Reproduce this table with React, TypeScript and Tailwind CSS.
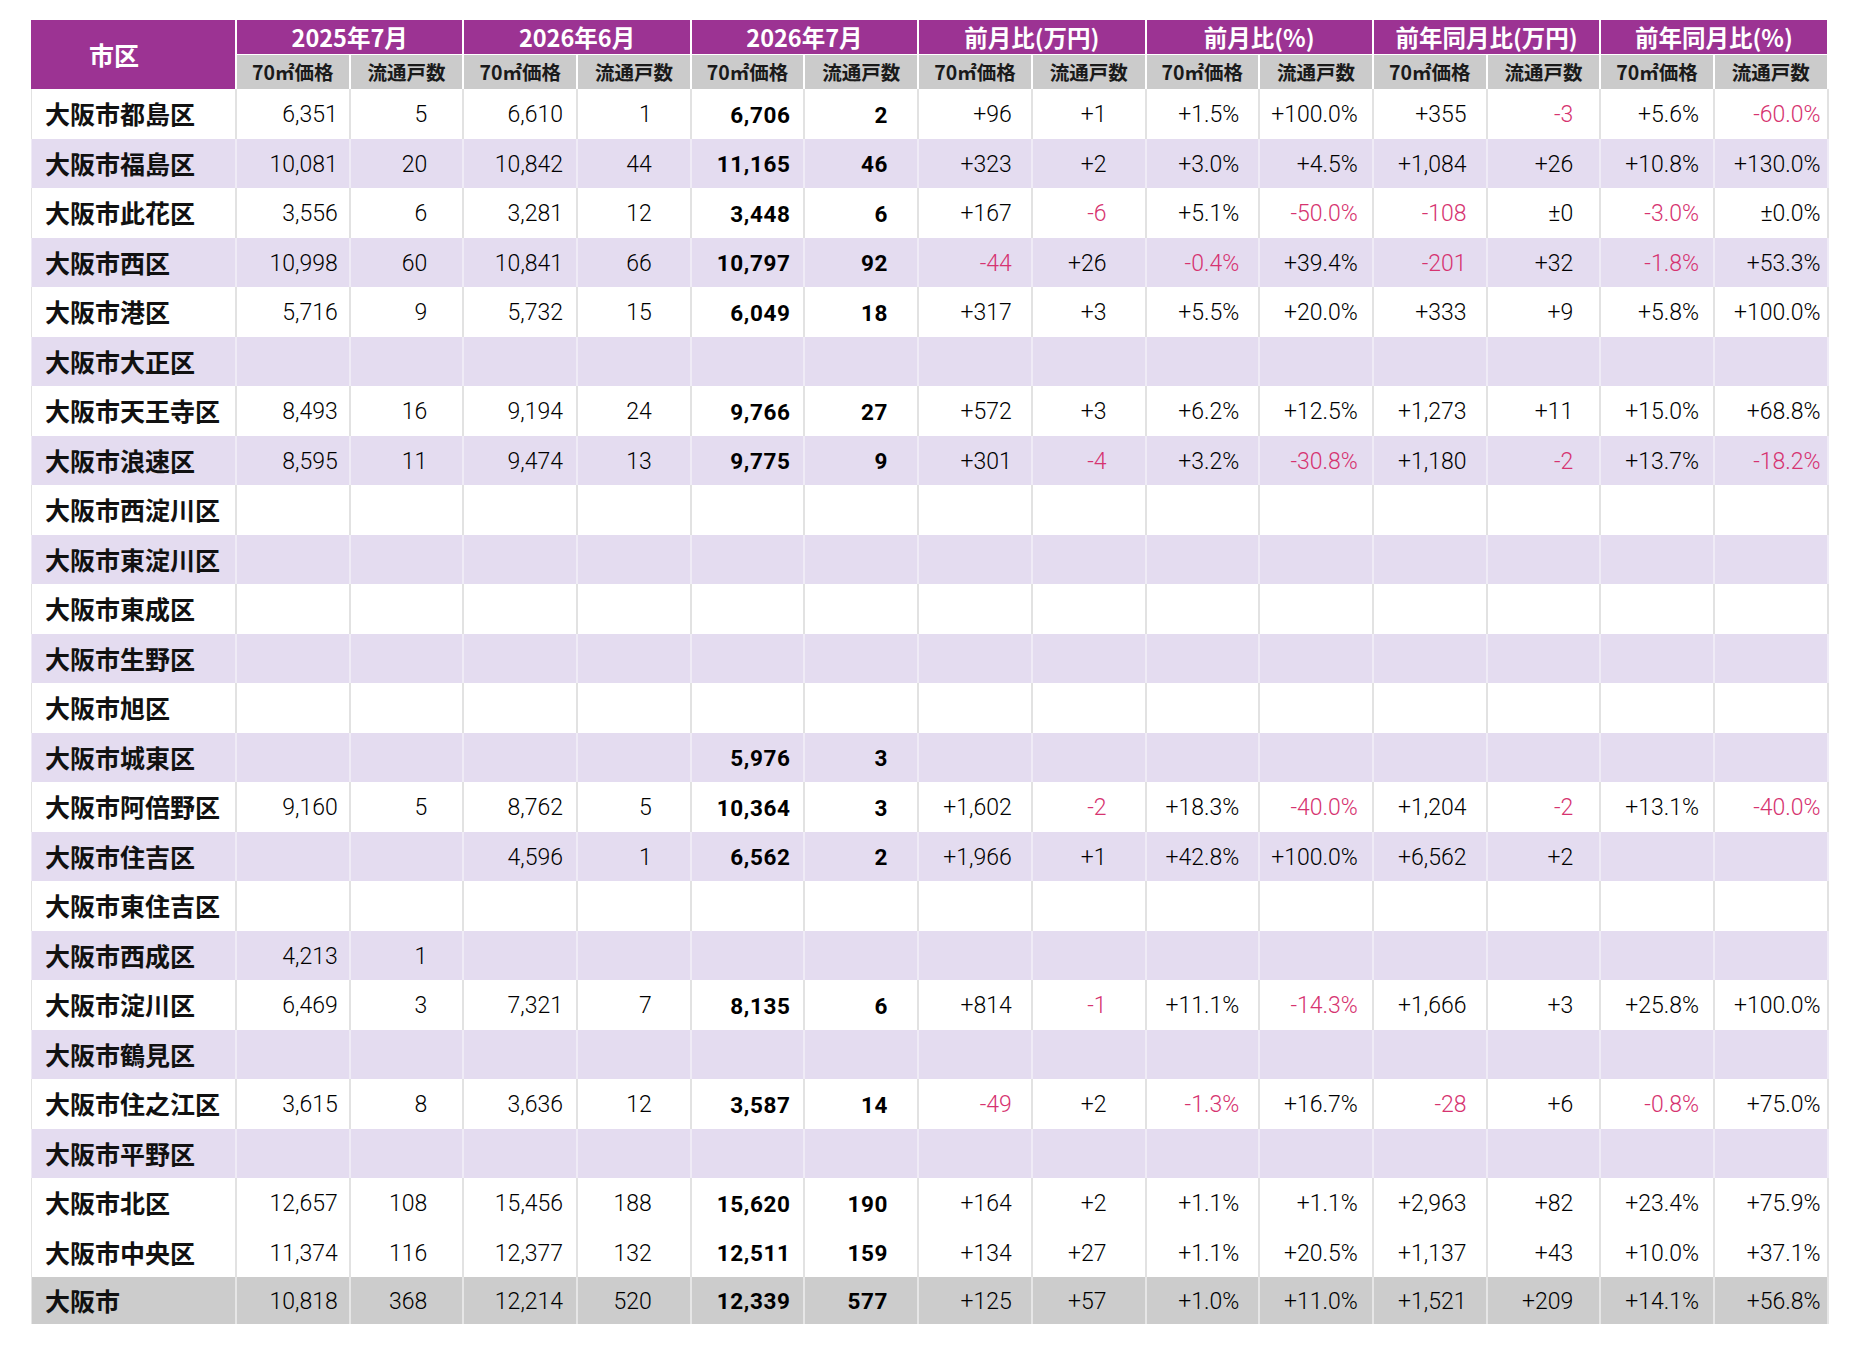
import React from "react";

const PR = [
  "pr-[11px]",
  "pr-[35px]",
  "pr-[13px]",
  "pr-[38px]",
  "pr-[13px]",
  "pr-[29px]",
  "pr-[19px]",
  "pr-[38px]",
  "pr-[19px]",
  "pr-[14px]",
  "pr-[19px]",
  "pr-[26px]",
  "pr-[14px]",
  "pr-[6px]",
];

type Row = { name: string; v: string[]; bg: "w" | "l" | "g" };

const E = ["", "", "", "", "", "", "", "", "", "", "", "", "", ""];

const rows: Row[] = [
  { name: "大阪市都島区", bg: "w", v: ["6,351", "5", "6,610", "1", "6,706", "2", "+96", "+1", "+1.5%", "+100.0%", "+355", "-3", "+5.6%", "-60.0%"] },
  { name: "大阪市福島区", bg: "l", v: ["10,081", "20", "10,842", "44", "11,165", "46", "+323", "+2", "+3.0%", "+4.5%", "+1,084", "+26", "+10.8%", "+130.0%"] },
  { name: "大阪市此花区", bg: "w", v: ["3,556", "6", "3,281", "12", "3,448", "6", "+167", "-6", "+5.1%", "-50.0%", "-108", "±0", "-3.0%", "±0.0%"] },
  { name: "大阪市西区", bg: "l", v: ["10,998", "60", "10,841", "66", "10,797", "92", "-44", "+26", "-0.4%", "+39.4%", "-201", "+32", "-1.8%", "+53.3%"] },
  { name: "大阪市港区", bg: "w", v: ["5,716", "9", "5,732", "15", "6,049", "18", "+317", "+3", "+5.5%", "+20.0%", "+333", "+9", "+5.8%", "+100.0%"] },
  { name: "大阪市大正区", bg: "l", v: E },
  { name: "大阪市天王寺区", bg: "w", v: ["8,493", "16", "9,194", "24", "9,766", "27", "+572", "+3", "+6.2%", "+12.5%", "+1,273", "+11", "+15.0%", "+68.8%"] },
  { name: "大阪市浪速区", bg: "l", v: ["8,595", "11", "9,474", "13", "9,775", "9", "+301", "-4", "+3.2%", "-30.8%", "+1,180", "-2", "+13.7%", "-18.2%"] },
  { name: "大阪市西淀川区", bg: "w", v: E },
  { name: "大阪市東淀川区", bg: "l", v: E },
  { name: "大阪市東成区", bg: "w", v: E },
  { name: "大阪市生野区", bg: "l", v: E },
  { name: "大阪市旭区", bg: "w", v: E },
  { name: "大阪市城東区", bg: "l", v: ["", "", "", "", "5,976", "3", "", "", "", "", "", "", "", ""] },
  { name: "大阪市阿倍野区", bg: "w", v: ["9,160", "5", "8,762", "5", "10,364", "3", "+1,602", "-2", "+18.3%", "-40.0%", "+1,204", "-2", "+13.1%", "-40.0%"] },
  { name: "大阪市住吉区", bg: "l", v: ["", "", "4,596", "1", "6,562", "2", "+1,966", "+1", "+42.8%", "+100.0%", "+6,562", "+2", "", ""] },
  { name: "大阪市東住吉区", bg: "w", v: E },
  { name: "大阪市西成区", bg: "l", v: ["4,213", "1", "", "", "", "", "", "", "", "", "", "", "", ""] },
  { name: "大阪市淀川区", bg: "w", v: ["6,469", "3", "7,321", "7", "8,135", "6", "+814", "-1", "+11.1%", "-14.3%", "+1,666", "+3", "+25.8%", "+100.0%"] },
  { name: "大阪市鶴見区", bg: "l", v: E },
  { name: "大阪市住之江区", bg: "w", v: ["3,615", "8", "3,636", "12", "3,587", "14", "-49", "+2", "-1.3%", "+16.7%", "-28", "+6", "-0.8%", "+75.0%"] },
  { name: "大阪市平野区", bg: "l", v: E },
  { name: "大阪市北区", bg: "w", v: ["12,657", "108", "15,456", "188", "15,620", "190", "+164", "+2", "+1.1%", "+1.1%", "+2,963", "+82", "+23.4%", "+75.9%"] },
  { name: "大阪市中央区", bg: "w", v: ["11,374", "116", "12,377", "132", "12,511", "159", "+134", "+27", "+1.1%", "+20.5%", "+1,137", "+43", "+10.0%", "+37.1%"] },
  { name: "大阪市", bg: "g", v: ["10,818", "368", "12,214", "520", "12,339", "577", "+125", "+57", "+1.0%", "+11.0%", "+1,521", "+209", "+14.1%", "+56.8%"] },
];

const groups = [
  "2025年7月",
  "2026年6月",
  "2026年7月",
  "前月比(万円)",
  "前月比(%)",
  "前年同月比(万円)",
  "前年同月比(%)",
];

const JP = "font-['Noto_Sans_CJK_JP','Noto_Sans_CJK_SC',sans-serif]";
const NUM = "font-['Roboto','Noto_Sans_CJK_JP',sans-serif]";

export default function App() {
  return (
    <div className="min-h-[1350px] w-[1860px] bg-white pl-[31px] pt-[20px]">
      <div className="grid grid-cols-[206px_repeat(14,113.7px)] grid-rows-[35px_34px_repeat(24,49.5px)_47px]">
        {/* header */}
        <div
          className={`row-span-2 flex items-center border-r-2 border-white bg-[#9c3393] pl-[58px] text-[25px] font-bold text-white ${JP}`}
        >
          市区
        </div>
        {groups.map((g) => (
          <div
            key={g}
            className={`col-span-2 flex items-center justify-center border-r-2 border-b-[1.5px] border-white bg-[#9c3393] pt-[1px] text-[23.5px] font-semibold leading-none text-white ${JP}`}
          >
            {g}
          </div>
        ))}
        {groups.map((g) => (
          <React.Fragment key={g + "s"}>
            <div
              className={`flex items-center justify-center border-r-2 border-white bg-[#cbcbcb] text-[19.5px] font-bold leading-none text-[#1a1a1a] ${JP}`}
            >
              70㎡価格
            </div>
            <div
              className={`flex items-center justify-center border-r-2 border-white bg-[#cbcbcb] text-[19.5px] font-bold leading-none text-[#1a1a1a] ${JP}`}
            >
              流通戸数
            </div>
          </React.Fragment>
        ))}
        {/* body */}
        {rows.map((r) => {
          const bg =
            r.bg === "w"
              ? "bg-white border-[#e2e2e2]"
              : r.bg === "l"
              ? "bg-[#e4dcf0] border-[#efebf6]"
              : "bg-[#cccccc] border-[#e6e6e6]";
          return (
            <React.Fragment key={r.name}>
              <div
                className={`flex items-center border-r-2 border-l pl-[13px] text-[25px] font-bold leading-none text-[#111] ${JP} ${bg}`}
              >
                {r.name}
              </div>
              {r.v.map((val, i) => {
                const bold = i === 4 || i === 5;
                const red = val.startsWith("-");
                return (
                  <div
                    key={i}
                    className={`flex items-center justify-end border-r-2 pt-[2px] leading-none ${NUM} ${PR[i]} ${bg} ${
                      bold ? "text-[22.5px] font-bold tracking-[0.6px]" : "text-[23px] font-light"
                    } ${red ? "text-[#d63370]" : "text-black"}`}
                  >
                    {val}
                  </div>
                );
              })}
            </React.Fragment>
          );
        })}
      </div>
    </div>
  );
}
